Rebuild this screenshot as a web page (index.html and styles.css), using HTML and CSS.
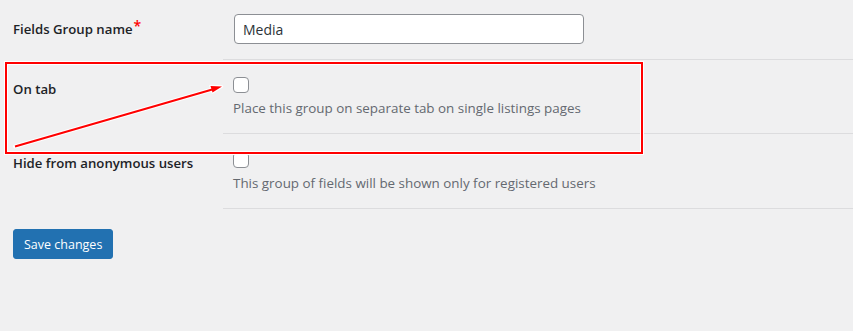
FILE: index.html
```html
<!DOCTYPE html>
<html lang="en">
<head>
  <meta charset="UTF-8">
  <meta name="viewport" content="width=device-width, initial-scale=1.0">
  <title>Fields Group</title>
  <link rel="stylesheet" href="styles.css">
</head>
<body>
  <form class="settings-form">
    <!-- Field rows -->
    <div class="form-row">
      <label class="row-label" for="group-name">Fields Group name<span class="required">*</span></label>
      <div class="row-field">
        <input type="text" id="group-name" class="text-input" value="Media">
      </div>
    </div>

    <div class="form-row">
      <label class="row-label" for="on-tab">On tab</label>
      <div class="row-field">
        <input type="checkbox" id="on-tab" class="checkbox">
        <p class="description">Place this group on separate tab on single listings pages</p>
      </div>
    </div>

    <div class="form-row">
      <label class="row-label" for="hide-anon">Hide from anonymous users</label>
      <div class="row-field row-field-last">
        <input type="checkbox" id="hide-anon" class="checkbox">
        <p class="description">This group of fields will be shown only for registered users</p>
      </div>
    </div>

    <button type="button" class="save-button">Save changes</button>
  </form>

  <!-- Annotation: highlight box and arrow -->
  <div class="highlight-box"></div>
  <svg class="arrow" width="853" height="331" viewBox="0 0 853 331">
    <line x1="15" y1="146.5" x2="214" y2="89" stroke="#fff" stroke-width="4" stroke-linecap="round"/>
    <polygon points="222,86.5 210.5,86 212.5,92.5" fill="#fff" stroke="#fff" stroke-width="2.5" stroke-linejoin="round"/>
    <line x1="15" y1="146.5" x2="214" y2="89" stroke="#f00" stroke-width="2"/>
    <polygon points="222,86.5 210.5,86 212.5,92.5" fill="#f00"/>
  </svg>
</body>
</html>
```

FILE: styles.css
```css
/* Global Styles */
body {
  margin: 0;
  font-family: 'Open Sans', 'Noto Sans', sans-serif;
  background-color: #f0f0f1;
  color: #1d2327;
  font-size: 13px;
}

.settings-form {
  display: flex;
  flex-direction: column;
  align-items: flex-start;
}

/* Rows */
.form-row {
  display: flex;
  width: 100%;
}

.row-label {
  width: 223px;
  flex-shrink: 0;
  box-sizing: border-box;
  padding: 19px 10px 0 13px;
  font-size: 13.2px;
  font-weight: 600;
  line-height: 20px;
}

.required {
  color: #f00;
  font-size: 14px;
  margin-left: 1px;
  vertical-align: top;
  line-height: 14px;
}

.row-field {
  flex: 1;
  padding: 17px 10px 15px;
  border-bottom: 1px solid #dcdcde;
}

.form-row:first-child .row-field {
  padding: 14px 11px 15px;
}

.row-field-last {
  padding-top: 18px;
  padding-bottom: 15px;
}

/* Inputs */
.text-input {
  display: block;
  box-sizing: border-box;
  width: 350px;
  height: 30px;
  margin: 0;
  padding: 0 8px;
  font-family: inherit;
  font-size: 14px;
  color: #2c3338;
  background-color: #fff;
  border: 1px solid #8c8f94;
  border-radius: 4px;
}

.checkbox {
  appearance: none;
  display: block;
  width: 16px;
  height: 16px;
  margin: 0;
  background-color: #fff;
  border: 1px solid #8c8f94;
  border-radius: 4px;
}

.description {
  margin: 5px 0 0;
  font-size: 13.4px;
  line-height: 20px;
  color: #646970;
}

/* Save button */
.save-button {
  margin: 20px 0 0 13px;
  height: 30px;
  padding: 0 10px;
  font-family: inherit;
  font-size: 12.5px;
  color: #fff;
  background-color: #2271b1;
  border: 1px solid #2271b1;
  border-radius: 3px;
  cursor: pointer;
}

/* Annotation */
.highlight-box {
  position: absolute;
  left: 5px;
  top: 62px;
  width: 634px;
  height: 88px;
  border: 2px solid #f00;
  outline: 1px solid #fff;
  box-shadow: inset 0 0 0 1px #fff;
}

.arrow {
  position: absolute;
  left: 0;
  top: 0;
  pointer-events: none;
}
```
